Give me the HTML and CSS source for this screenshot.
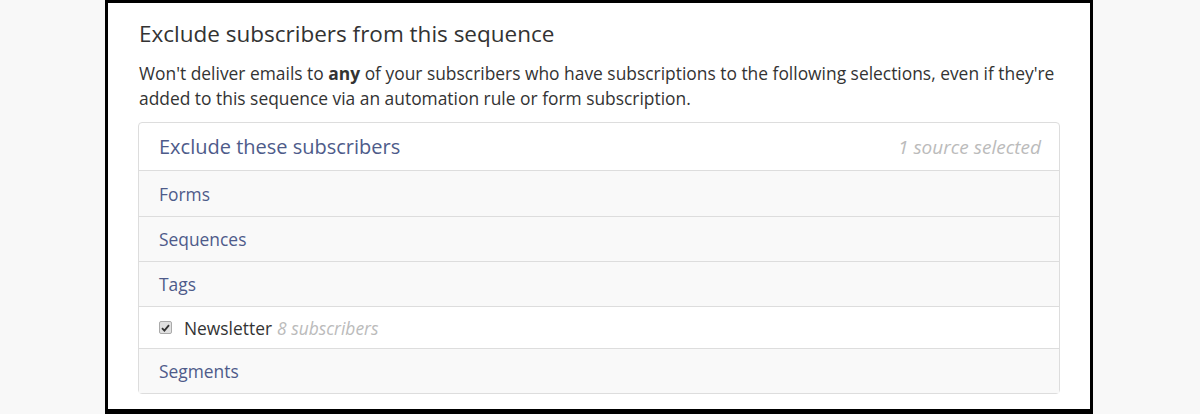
FILE: index.html
```html
<!DOCTYPE html>
<html lang="en">
<head>
    <meta charset="UTF-8">
    <title>Exclude subscribers</title>
    <link rel="stylesheet" href="styles.css">
</head>
<body>
    <div class="card">
        <h2>Exclude subscribers from this sequence</h2>
        <p class="description">Won't deliver emails to <strong>any</strong> of your subscribers who have subscriptions to the following selections, even if they're added to this sequence via an automation rule or form subscription.</p>
        <div class="panel">
            <div class="panel-head">
                <span class="panel-title">Exclude these subscribers</span>
                <span class="panel-count">1 source selected</span>
            </div>
            <div class="group">Forms</div>
            <div class="group">Sequences</div>
            <div class="group">Tags</div>
            <label class="option">
                <span class="check">
                    <svg width="9" height="8" viewBox="0 0 9 8"><path d="M1 4.2 L3.4 6.6 L8 1.2" fill="none" stroke="#333" stroke-width="1.8"/></svg>
                </span>
                <span class="option-name">Newsletter</span>
                <span class="option-meta">8 subscribers</span>
            </label>
            <div class="group">Segments</div>
        </div>
    </div>
</body>
</html>
```

FILE: styles.css
```css
body {
    margin: 0;
    background: #f8f8f8;
    font-family: 'Open Sans', sans-serif;
    color: #333;
}

.card {
    background: #fff;
    border: 3px solid #000;
    border-bottom-width: 5px;
    width: 922px;
    margin-left: 105px;
    padding: 16px 30px 15px 30px;
}

h2 {
    margin: 0 0 12px 1px;
    font-size: 22.5px;
    font-weight: 400;
    line-height: 30px;
    color: #333;
}

.description {
    margin: 0 0 11px 1px;
    font-size: 17.4px;
    line-height: 25px;
    color: #333;
}

.description strong {
    font-weight: 700;
}

.panel {
    border: 1px solid #ddd;
    border-radius: 4px;
}

.panel-head {
    display: flex;
    justify-content: space-between;
    align-items: center;
    height: 47px;
    padding: 0 18px 0 20px;
    border-bottom: 1px solid #ddd;
}

.panel-title {
    font-size: 20px;
    color: #4e5b8a;
}

.panel-count {
    font-size: 19px;
    font-style: italic;
    color: #bbb;
}

.group {
    display: flex;
    align-items: center;
    height: 44px;
    padding: 0 20px;
    background: #f9f9f9;
    border-bottom: 1px solid #ddd;
    font-size: 17.4px;
    color: #4e5b8a;
}

.panel-head + .group {
    height: 45px;
}

.group:last-child {
    border-bottom: none;
}

.option {
    display: flex;
    align-items: center;
    height: 41px;
    padding: 0 20px;
    border-bottom: 1px solid #ddd;
    font-size: 17.4px;
}

.check {
    display: flex;
    align-items: center;
    justify-content: center;
    width: 11px;
    height: 11px;
    margin-right: 12px;
    border: 1px solid #aaa;
    border-radius: 2px;
    background: #e0e0e0;
}

.option-name {
    color: #333;
    margin-right: 5px;
}

.option-meta {
    color: #bbb;
    font-style: italic;
}
```
